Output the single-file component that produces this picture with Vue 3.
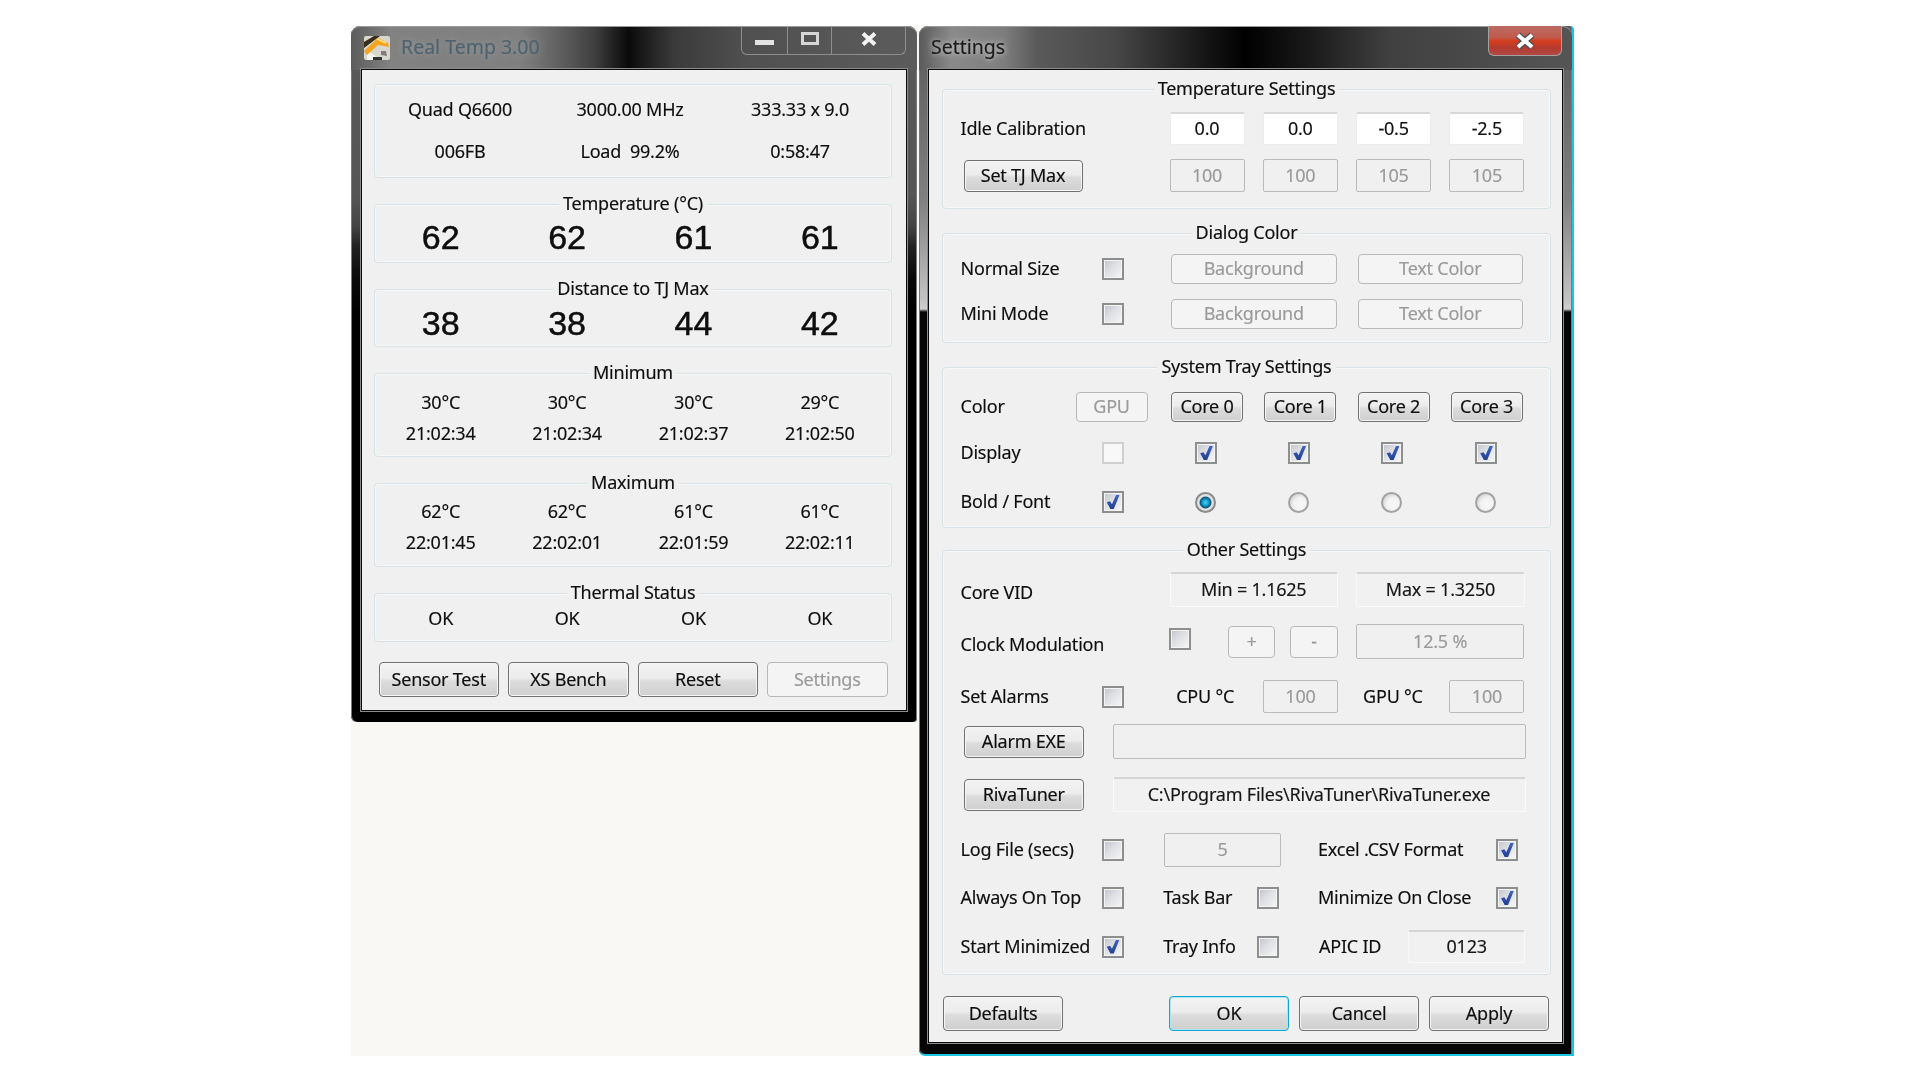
<template>
  <div class="page ui">
    <div class="left-col">
      <section class="win win-a">
        <header class="tbar tbar-a">
          <svg class="appicon" viewBox="0 0 26 24" width="26" height="24">
            <rect x="0" y="0" width="26" height="24" rx="2" fill="#d9d6cd" />
            <path d="M3 24V14L17 24Z" fill="#f4f2ec" />
            <path d="M0 6L10 0H16L0 12Z" fill="#3a2c16" />
            <path d="M0 15L14 2L24 7L25 11L14 9L3 19Z" fill="#f2a51e" />
            <path d="M13 3L22 7" stroke="#fde07a" stroke-width="1.5" />
            <path d="M17 15L22 15L23 20L17 19Z" fill="#7d7d7d" />
            <rect x="9" y="21" width="9" height="3" fill="#333" />
          </svg>
          <span class="ttl ttl-a">Real Temp 3.00</span>
          <div class="caps">
            <div class="cap c1"><i class="g-min"></i></div>
            <div class="cap c2"><i class="g-max"></i></div>
            <div class="cap c3">
              <svg viewBox="0 0 16 14" width="16" height="14"><path d="M2 1.5L14 12.5M14 1.5L2 12.5" stroke="#f2f2f2" stroke-width="4" /></svg>
            </div>
          </div>
        </header>
        <div class="client client-a">
          <div class="grp g1">
            <div class="tri">
              <span>Quad Q6600</span><span>3000.00 MHz</span><span>333.33 x 9.0</span>
              <span>006FB</span><span>Load&nbsp; 99.2%</span><span>0:58:47</span>
            </div>
          </div>
          <div class="grp g2">
            <div class="legend">Temperature (°C)</div>
            <div class="quad big"><span v-for="(v, i) in temps" :key="i">{{ v }}</span></div>
          </div>
          <div class="grp g2 g2b">
            <div class="legend">Distance to TJ Max</div>
            <div class="quad big"><span v-for="(v, i) in dist" :key="i">{{ v }}</span></div>
          </div>
          <div class="grp g3">
            <div class="legend">Minimum</div>
            <div class="quad small"><span v-for="(v, i) in minT" :key="i">{{ v }}</span></div>
            <div class="quad small"><span v-for="(v, i) in minC" :key="i">{{ v }}</span></div>
          </div>
          <div class="grp g3 g3b">
            <div class="legend">Maximum</div>
            <div class="quad small"><span v-for="(v, i) in maxT" :key="i">{{ v }}</span></div>
            <div class="quad small"><span v-for="(v, i) in maxC" :key="i">{{ v }}</span></div>
          </div>
          <div class="grp g4">
            <div class="legend">Thermal Status</div>
            <div class="quad small"><span v-for="i in 4" :key="i">OK</span></div>
          </div>
          <div class="actions-a">
            <div class="btn">Sensor Test</div>
            <div class="btn">XS Bench</div>
            <div class="btn">Reset</div>
            <div class="btn off">Settings</div>
          </div>
        </div>
      </section>
    </div>

    <section class="win win-b">
      <header class="tbar tbar-b">
        <span class="ttl ttl-b">Settings</span>
        <div class="close">
          <svg viewBox="0 0 22 18" width="22" height="18"><path d="M4 3L18 15M18 3L4 15" stroke="#46505a" stroke-width="6.5" /><path d="M4 3L18 15M18 3L4 15" stroke="#fff" stroke-width="4" /></svg>
        </div>
      </header>
      <div class="client client-b">
        <div class="grp s1">
          <div class="legend">Temperature Settings</div>
          <div class="row r-temp first">
            <span>Idle Calibration</span>
            <div v-for="(v, i) in idle" :key="i" class="fld live">{{ v }}</div>
          </div>
          <div class="row r-temp second">
            <div class="btn tj">Set TJ Max</div>
            <div v-for="(v, i) in tj" :key="i" class="fld dis">{{ v }}</div>
          </div>
        </div>

        <div class="grp s2">
          <div class="legend">Dialog Color</div>
          <div class="row r-dialog first">
            <span>Normal Size</span><i class="chk"></i>
            <div class="btn off">Background</div><div class="btn off">Text Color</div>
          </div>
          <div class="row r-dialog second">
            <span>Mini Mode</span><i class="chk"></i>
            <div class="btn off">Background</div><div class="btn off">Text Color</div>
          </div>
        </div>

        <div class="grp s3">
          <div class="legend">System Tray Settings</div>
          <div class="row r-color">
            <span>Color</span>
            <div class="btn off">GPU</div>
            <div v-for="c in 4" :key="c" class="btn">Core {{ c - 1 }}</div>
          </div>
          <div class="row r-five r-disp">
            <span>Display</span>
            <i class="chk blank"></i>
            <i v-for="c in 4" :key="c" class="chk on"></i>
          </div>
          <div class="row r-five r-bold">
            <span>Bold / Font</span>
            <i class="chk on"></i>
            <i class="rad sel"></i><i class="rad"></i><i class="rad"></i><i class="rad"></i>
          </div>
        </div>

        <div class="grp s4">
          <div class="legend">Other Settings</div>
          <div class="row r-vid">
            <span class="low">Core VID</span>
            <div class="fld ro">Min = 1.1625</div>
            <div class="fld ro">Max = 1.3250</div>
          </div>
          <div class="row r-clock">
            <span class="low">Clock Modulation</span>
            <i class="chk"></i>
            <div class="btn off pm">+</div>
            <div class="btn off pm">-</div>
            <div class="fld dis">12.5 %</div>
          </div>
          <div class="row r-alarm">
            <span>Set Alarms</span><i class="chk"></i>
            <span>CPU °C</span><div class="fld dis">100</div>
            <span>GPU °C</span><div class="fld dis">100</div>
          </div>
          <div class="row r-path r-exe">
            <div class="btn">Alarm EXE</div>
            <div class="fld dis"></div>
          </div>
          <div class="row r-path r-riva">
            <div class="btn">RivaTuner</div>
            <div class="fld ro">C:\Program Files\RivaTuner\RivaTuner.exe</div>
          </div>
          <div class="row r-log">
            <span>Log File (secs)</span><i class="chk"></i>
            <div class="fld dis">5</div>
            <span>Excel .CSV Format</span><i class="chk on"></i>
          </div>
          <div class="row r-top">
            <span>Always On Top</span><i class="chk"></i>
            <span>Task Bar</span><i class="chk"></i>
            <span>Minimize On Close</span><i class="chk on"></i>
          </div>
          <div class="row r-start">
            <span>Start Minimized</span><i class="chk on"></i>
            <span>Tray Info</span><i class="chk"></i>
            <span class="apic">APIC ID</span><div class="fld ro">0123</div>
          </div>
        </div>

        <div class="actions-b">
          <div class="btn">Defaults</div>
          <div class="btn focus">OK</div>
          <div class="btn">Cancel</div>
          <div class="btn">Apply</div>
        </div>
      </div>
    </section>
  </div>
</template>

<script setup>
const temps = ['62', '62', '61', '61']
const dist = ['38', '38', '44', '42']
const minT = ['30°C', '30°C', '30°C', '29°C']
const minC = ['21:02:34', '21:02:34', '21:02:37', '21:02:50']
const maxT = ['62°C', '62°C', '61°C', '61°C']
const maxC = ['22:01:45', '22:02:01', '22:01:59', '22:02:11']
const idle = ['0.0', '0.0', '-0.5', '-2.5']
const tj = ['100', '100', '105', '105']
</script>

<style scoped>
.page {
  width: 1920px;
  height: 1080px;
  box-sizing: border-box;
  padding: 26px 0 0 351px;
  background: #fff;
  display: flex;
  align-items: flex-start;
  overflow: hidden;
}
.ui {
  font-family: "Noto Sans", "Open Sans", sans-serif;
  font-size: 18px;
  letter-spacing: -0.22px;
  color: #0e0e0e;
  -webkit-text-stroke: 0.15px currentColor;
}
.left-col {
  width: 568px;
  height: 1030px;
  background: #f9f8f4;
  flex: none;
}
.win {
  box-sizing: border-box;
  border-radius: 9px 9px 4px 6px;
  display: flex;
  flex-direction: column;
  box-shadow: inset 1px 0 0 #7a7a7a, inset -1px 0 0 #7a7a7a;
  filter: blur(0.45px);
}
.win-a {
  width: 566px;
  height: 696px;
  padding: 0 11px 12px;
  background: linear-gradient(180deg, #5a5a5a 0, #555 170px, #444 200px, #222 220px, #0a0a0a 250px, #000 290px);
}
.win-b {
  width: 655px;
  height: 1030px;
  flex: none;
  padding: 0 10px 12px;
  border-right: 2px solid #1cc4de;
  border-bottom: 2px solid #1cc4de;
  border-radius: 9px 4px 0 6px;
  background: linear-gradient(180deg, #5a5a5a 0, #666 60px, #808080 175px, #c4c4c4 275px, #cfcfcf 283px, #050505 286px);
}
.tbar {
  height: 44px;
  flex: none;
  margin: 0 -11px;
  padding: 0 11px;
  display: flex;
  align-items: flex-start;
  border-radius: 9px 9px 0 0;
  box-shadow: inset 0 1px 0 #9a9a9a;
}
.tbar-a {
  background: linear-gradient(90deg, #5c5c5c 0, #828282 7%, #808080 30%, #5f5f5f 37%, #3f3f3f 43%, #0a0a0a 49%, #3a3a3a 57%, #505050 70%, #5c5c5c 100%);
}
.tbar-b {
  margin: 0 -10px;
  padding: 0 10px 0 12px;
  background: linear-gradient(90deg, #5a5a5a 0, #8a8a8a 5%, #7d7d7d 13%, #5a5a5a 18%, #474747 30%, #1c1c1c 42%, #000 50%, #1a1a1a 60%, #404040 72%, #555 100%);
}
.appicon {
  margin: 10px 0 0 2px;
  flex: none;
}
.ttl {
  font-size: 19.5px;
  line-height: 24px;
  margin-top: 9px;
  white-space: nowrap;
  letter-spacing: 0;
}
.ttl-a {
  margin-left: 11px;
  color: #4d6470;
  text-shadow: 0 0 10px rgba(190, 190, 190, 0.55);
}
.ttl-b {
  color: #1c1c1c;
  text-shadow: 0 0 8px rgba(225, 225, 225, 0.8), 0 0 4px rgba(225, 225, 225, 0.5);
}
.caps {
  margin-left: auto;
  height: 29px;
  display: flex;
  border: 1px solid #8e8e8e;
  border-top: 0;
  border-radius: 0 0 6px 6px;
  box-sizing: border-box;
}
.cap {
  display: flex;
  align-items: flex-start;
  justify-content: center;
  box-sizing: border-box;
  padding-top: 6px;
}
.cap + .cap { border-left: 1px solid #8e8e8e; }
.c1 { width: 45px; }
.c2 { width: 44px; }
.c3 { width: 74px; }
.g-min {
  width: 19px;
  height: 5px;
  margin-top: 8px;
  background: #e2e2e2;
}
.g-max {
  width: 18px;
  height: 13px;
  box-sizing: border-box;
  border: 3px solid #d6d6d6;
}
.close {
  margin-left: auto;
  width: 74px;
  height: 30px;
  box-sizing: border-box;
  display: flex;
  align-items: center;
  justify-content: center;
  border: 1.5px solid #a9a09e;
  border-top: 0;
  border-radius: 0 0 6px 6px;
  background: linear-gradient(180deg, #b86a62 0, #c25a4c 40%, #d63c1c 52%, #b33a30 75%, #b04a44 100%);
}
.client {
  flex: 1;
  display: flex;
  flex-direction: column;
  background: #f0f0f0;
  box-sizing: border-box;
  box-shadow: 0 0 0 1px #0a0a0a, 0 0 0 2px #8c8c8c;
}
.client-a {
  padding: 14px 14px 0 12px;
  row-gap: 26px;
}
.client-b {
  padding: 19px 11px 0 13px;
  row-gap: 24px;
}
.grp {
  box-sizing: border-box;
  border: 1px solid #d7e2e6;
  border-radius: 4px;
  box-shadow: inset 0 0 0 1px #f7f7f7;
  flex: none;
}
.legend {
  width: fit-content;
  height: 20px;
  line-height: 18px;
  margin: -11px auto 0;
  padding: 0 4px;
  background: #f0f0f0;
}
.g1 { height: 94px; padding-top: 3px; }
.g2 { height: 59px; }
.g2b { height: 58px; }
.g3 { height: 84px; }
.g4 { height: 49px; }
.tri {
  display: grid;
  grid-template-columns: repeat(3, 170px);
  grid-auto-rows: 42px;
  align-items: center;
  justify-items: center;
}
.quad {
  display: grid;
  grid-template-columns: repeat(4, 126.4px);
  justify-items: center;
  margin-left: 2.5px;
}
.big {
  font-family: "Liberation Sans", Arial, sans-serif;
  font-size: 34px;
  letter-spacing: 0;
  line-height: 40px;
  height: 40px;
  margin-top: 3px;
  -webkit-text-stroke: 0.5px #0c0c0c;
}
.g2b .big { margin-top: 4px; }
.small { line-height: 31px; height: 31px; }
.g3 .small:nth-child(2) { margin-top: 4px; }
.g3b .small:nth-child(2) { margin-top: 3px; }
.g4 .small { line-height: 30px; height: 30px; }
.actions-a {
  display: grid;
  grid-template-columns: repeat(4, 120.5px);
  column-gap: 9px;
  margin: -6px 0 0 4.5px;
}
.btn {
  box-sizing: border-box;
  height: 35px;
  padding-bottom: 2px;
  display: flex;
  align-items: center;
  justify-content: center;
  white-space: nowrap;
  border: 1.5px solid #717171;
  border-radius: 4px;
  background: linear-gradient(180deg, #f3f3f3 0, #ececec 45%, #dcdcdc 55%, #cfcfcf 100%);
  box-shadow: inset 0 0 0 1px #f6f6f6;
}
.btn.off {
  border-color: #b6b9bb;
  background: #f4f4f4;
  box-shadow: none;
  color: #9a9a9a;
}
.btn.focus {
  border-color: #16a4d0;
  box-shadow: inset 0 0 0 1px #a9e6f6;
}
.row {
  display: grid;
  align-items: center;
  justify-items: start;
  margin-left: 17.5px;
}
.row > span { padding-bottom: 2px; }
.fld {
  box-sizing: border-box;
  width: 100%;
  height: 100%;
  padding-bottom: 2px;
  display: flex;
  align-items: center;
  justify-content: center;
  white-space: nowrap;
  border-radius: 2px;
}
.fld.live {
  background: #fff;
  border: 1px solid #ececec;
  border-top: 2px solid #d8d8d8;
  color: #101010;
}
.fld.dis {
  background: #f0f0f0;
  border: 1.5px solid #b8bcbd;
  color: #9a9a9a;
}
.fld.ro {
  background: #f1f1f1;
  border: 1px solid #f9f9f9;
  border-top: 2px solid #d5d5d5;
  color: #161616;
}
.chk {
  position: relative;
  display: block;
  box-sizing: border-box;
  width: 22px;
  height: 22px;
  border: 2px solid #8d8f8f;
  background: linear-gradient(135deg, #c2c4cc 0, #dfe0e4 45%, #f6f6f6 100%);
  box-shadow: inset 0 0 0 1px #f4f4f4;
}
.chk.blank {
  border-color: #cfd0d0;
  box-shadow: none;
  background: #f8f8f8;
}
.chk.on::after {
  content: "";
  position: absolute;
  left: 3px;
  top: 2px;
  width: 13px;
  height: 14px;
  background: linear-gradient(180deg, #3f63c0, #23408f);
  clip-path: polygon(2% 52%, 28% 44%, 42% 66%, 74% 0, 100% 0, 56% 100%, 30% 100%);
}
.rad {
  display: block;
  position: relative;
  box-sizing: border-box;
  width: 21px;
  height: 21px;
  border-radius: 50%;
  border: 2px solid #a2a2a2;
  background: radial-gradient(circle at 62% 62%, #f7f7f7 0, #f2f2f2 45%, #c0c0c0 100%);
}
.rad.sel {
  border-color: #8a8a8a;
  background: radial-gradient(circle, #4fd0ee 0, #0c9ac8 28%, #0a4f78 44%, #e4e4e4 54%, #d4d4d4 100%);
}

.s1 { height: 120px; }
.s2 { height: 110px; }
.s3 { height: 161px; }
.s4 { height: 425px; margin-top: -2px; }

.r-temp {
  grid-template-columns: 209px 93.3px 93.3px 93.3px 75px;
  height: 33px;
}
.r-temp .fld { width: 75px; }
.r-temp.first { margin-top: 13px; }
.r-temp.second { margin-top: 14px; }
.btn.tj {
  width: 119px;
  height: 32px;
  margin-left: 3px;
}
.r-dialog {
  grid-template-columns: 141px 69.5px 186.5px 166px;
  height: 30px;
}
.r-dialog .btn {
  width: 165.5px;
  height: 30px;
}
.r-dialog.first { margin-top: 11px; }
.r-dialog.second { margin-top: 15px; }

.r-color {
  grid-template-columns: 115px 95.5px 93.3px 93.3px 93px 73px;
  height: 30px;
  margin-top: 15px;
}
.r-color .btn {
  width: 72px;
  height: 30px;
}
.r-five {
  grid-template-columns: 141px 93.4px 93.2px 93.3px 93.6px 22px;
  height: 40px;
}
.r-disp { margin-top: 11px; }
.r-bold { margin-top: 9px; }

.r-vid {
  grid-template-columns: 209px 186.7px 168.3px;
  height: 35px;
  margin-top: 12px;
}
.r-vid .fld { width: 168.5px; }
.row > .low { padding: 6px 0 2px; }
.r-clock {
  grid-template-columns: 208.4px 58.9px 62.5px 65.5px 168.7px;
  height: 35px;
  margin-top: 17px;
}
.r-clock .chk { margin-top: -6px; }
.r-clock .pm {
  width: 47.7px;
  height: 32px;
}
.r-alarm {
  grid-template-columns: 141px 74.7px 86.8px 100.1px 86.4px 75px;
  height: 33px;
  margin-top: 21px;
}
.r-alarm .fld { width: 75px; }
.r-path {
  grid-template-columns: 152px 413px;
  height: 35px;
}
.r-path .btn {
  width: 120.5px;
  height: 32px;
  margin-left: 3px;
}
.r-exe { margin-top: 11px; }
.r-riva { margin-top: 18px; }
.r-log {
  grid-template-columns: 141px 62.6px 153.9px 177.8px 22px;
  height: 34px;
  margin-top: 21px;
}
.r-log .fld { width: 117px; }
.r-top {
  grid-template-columns: 141px 61.7px 94.1px 60.7px 177.8px 22px;
  height: 34px;
  margin-top: 14px;
}
.r-start {
  grid-template-columns: 141px 61.7px 94.1px 60.7px 90.2px 117px;
  height: 33px;
  margin-top: 15px;
}
.row > .apic { margin-left: 1px; }
.actions-b {
  display: grid;
  grid-template-columns: 120px 106px 120px 120px 120px;
  justify-items: start;
  grid-template-areas: "d . o c a";
  margin-top: -3px;
  margin-left: 1px;
  column-gap: 0;
}
.actions-b .btn { width: 120px; height: 35px; }
.actions-b .btn:nth-child(1) { grid-area: d; }
.actions-b .btn:nth-child(2) { grid-area: o; }
.actions-b .btn:nth-child(3) { grid-area: c; margin-left: 10px; }
.actions-b .btn:nth-child(4) { grid-area: a; margin-left: 20px; }
</style>
